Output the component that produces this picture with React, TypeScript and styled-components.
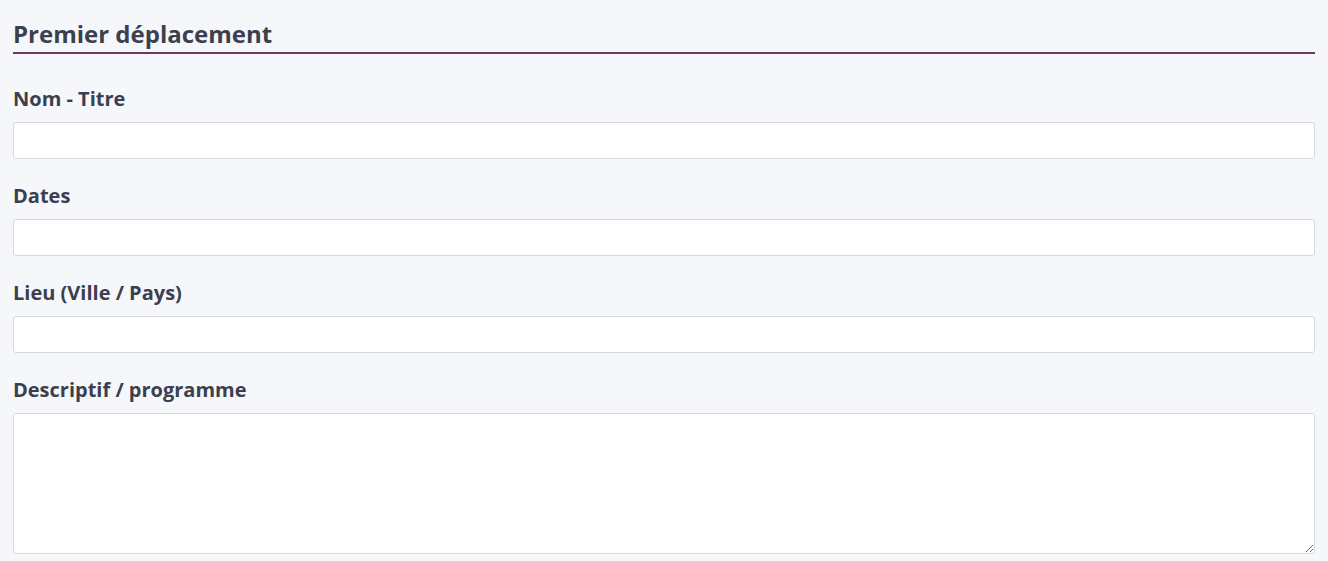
import styled, { createGlobalStyle } from 'styled-components';

const GlobalStyle = createGlobalStyle`
  html, body {
    margin: 0;
    padding: 0;
    background: #f5f7fb;
  }
  body {
    font-family: "Open Sans", "Liberation Sans", sans-serif;
    color: #3b3f4e;
  }
`;

const fields = ['Nom - Titre', 'Dates', 'Lieu (Ville / Pays)'];

const App = (): JSX.Element => (
  <>
    <GlobalStyle />
    <Page>
      <SectionTitle>Premier déplacement</SectionTitle>
      {fields.map((label) => (
        <Field key={label}>
          <Label>{label}</Label>
          <Input type="text" />
        </Field>
      ))}
      <Field>
        <Label>Descriptif / programme</Label>
        <TextArea />
      </Field>
    </Page>
  </>
);

export default App;

const Page = styled.div`
  padding: 18px 13px 0;
`;

const SectionTitle = styled.h2`
  margin: 0 0 31px;
  padding-bottom: 2px;
  font-size: 24px;
  line-height: 32px;
  font-weight: 700;
  color: #3b3f4e;
  border-bottom: 2px solid #6b3a61;
`;

const Field = styled.div`
  display: flex;
  flex-direction: column;
  margin-bottom: 23px;
`;

const Label = styled.label`
  font-size: 20px;
  line-height: 28px;
  font-weight: 700;
  margin-bottom: 9px;
`;

const Input = styled.input`
  box-sizing: border-box;
  height: 37px;
  width: 100%;
  border: 1px solid #d4d8de;
  border-radius: 3px;
  background: #fff;
  font-family: inherit;
  font-size: 16px;
  padding: 6px 10px;
  outline: 0;
`;

const TextArea = styled.textarea`
  box-sizing: border-box;
  height: 141px;
  width: 100%;
  border: 1px solid #d4d8de;
  border-radius: 3px;
  background: #fff;
  font-family: inherit;
  font-size: 16px;
  padding: 6px 10px;
  outline: 0;
  resize: vertical;
`;
